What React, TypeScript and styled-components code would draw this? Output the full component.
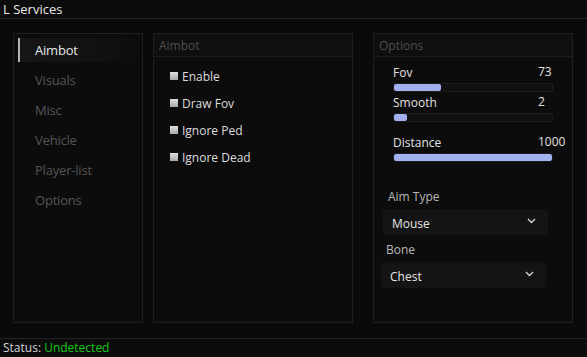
import React from 'react';
import styled, { createGlobalStyle } from 'styled-components';

// ---------------------------------------------------------------------------
// GLOBAL
// ---------------------------------------------------------------------------

const GlobalStyle = createGlobalStyle`
  html, body {
    margin: 0;
    padding: 0;
    background: #0a0a0a;
  }
  body {
    font-family: 'Open Sans', 'Noto Sans', sans-serif;
    color: #e0e0e0;
  }
  * { box-sizing: border-box; }
`;

// ---------------------------------------------------------------------------
// STYLED COMPONENTS
// ---------------------------------------------------------------------------

const Window = styled.div`
  width: 587px;
  height: 357px;
  display: flex;
  flex-direction: column;
  background: #0a0a0a;
  overflow: hidden;
`;

const TitleBar = styled.div`
  height: 19px;
  padding-left: 3px;
  border-bottom: 1px solid #262626;
  background: #0c0c0c;
  font-size: 13px;
  line-height: 18px;
  color: #e8e8e8;
`;

const Main = styled.div`
  flex: 1;
  display: flex;
  gap: 10px;
  padding: 14px 0 0 13px;
`;

const Sidebar = styled.nav`
  width: 130px;
  height: 290px;
  padding: 4px 0 0 4px;
  display: flex;
  flex-direction: column;
  gap: 6px;
  background: #0c0c0c;
  border: 1px solid #1f1f1f;
`;

const NavItem = styled.div<{ $active?: boolean }>`
  height: 24px;
  display: flex;
  align-items: center;
  padding-left: 15px;
  font-size: 13px;
  letter-spacing: -0.2px;
  color: ${({ $active }) => ($active ? '#e6e6e6' : '#555555')};
  border-left: 2px solid ${({ $active }) => ($active ? '#b4b4b4' : 'transparent')};
  background: ${({ $active }) =>
    $active ? 'linear-gradient(90deg, #161616 0%, #121212 55%, transparent 100%)' : 'transparent'};
`;

const Panel = styled.section<{ $shift?: number }>`
  width: 200px;
  height: 290px;
  margin-left: ${({ $shift = 0 }) => $shift}px;
  display: flex;
  flex-direction: column;
  background: #0c0c0c;
  border: 1px solid #1f1f1f;
`;

const PanelHeader = styled.div`
  height: 23px;
  padding-left: 5px;
  display: flex;
  align-items: center;
  background: #0f0f0f;
  border-bottom: 1px solid #1c1c1c;
  font-size: 12px;
  color: #4e4e4e;
`;

const CheckList = styled.div`
  display: flex;
  flex-direction: column;
  gap: 11px;
  padding: 11px 0 0 16px;
`;

const CheckRow = styled.label`
  height: 16px;
  display: flex;
  align-items: center;
  gap: 4px;
  font-size: 12px;
  color: #dcdcdc;
`;

const CheckBox = styled.span<{ $checked?: boolean }>`
  width: 8px;
  height: 8px;
  background: ${({ $checked }) =>
    $checked ? '#a3b0f0' : 'linear-gradient(180deg, #e0e0e0 0%, #a8a8a8 100%)'};
`;

const OptionsBody = styled.div`
  display: flex;
  flex-direction: column;
  padding: 7px 0 0 19px;
`;

const SliderBlock = styled.div<{ $gap?: number }>`
  position: relative;
  width: 160px;
  margin-top: ${({ $gap = 0 }) => $gap}px;
`;

const SliderLabel = styled.div`
  height: 16px;
  display: flex;
  align-items: center;
  font-size: 12px;
  color: #e2e2e2;
`;

const SliderValue = styled.span`
  position: absolute;
  left: 145px;
  top: 0;
  line-height: 16px;
  font-size: 12px;
  color: #e2e2e2;
`;

const Track = styled.div`
  margin-top: 3px;
  height: 9px;
  background: #101010;
  border: 1px solid #1c1c1c;
  border-radius: 2px;
  overflow: hidden;
`;

const Fill = styled.div`
  height: 100%;
  background: #a3b0f0;
  border-radius: 2px;
`;

const FieldLabel = styled.div<{ $top: number; $inset: number }>`
  margin-top: ${({ $top }) => $top}px;
  margin-left: ${({ $inset }) => $inset}px;
  height: 16px;
  display: flex;
  align-items: center;
  font-size: 12px;
  color: #b8b8b8;
`;

const Select = styled.div<{ $inset: number }>`
  width: 165px;
  height: 26px;
  margin-top: 5px;
  margin-left: ${({ $inset }) => $inset}px;
  padding: 2px 12px 0 9px;
  display: flex;
  align-items: center;
  justify-content: space-between;
  background: #141414;
  border-radius: 4px;
  font-size: 12px;
  color: #e6e6e6;

  svg {
    margin-top: -4px;
  }
`;

const Footer = styled.div`
  height: 19px;
  padding-left: 3px;
  border-top: 1px solid #232323;
  background: #0c0c0c;
  font-size: 12px;
  line-height: 18px;
  color: #d4d4d4;
`;

const StatusOk = styled.span`
  color: #13c913;
`;

// ---------------------------------------------------------------------------
// PARTS
// ---------------------------------------------------------------------------

const Chevron: React.FC = () => (
  <svg width="9" height="6" viewBox="0 0 9 6" fill="none">
    <path d="M1 1l3.5 3.5L8 1" stroke="#cfcfcf" strokeWidth="1.4" />
  </svg>
);

const navItems = ['Aimbot', 'Visuals', 'Misc', 'Vehicle', 'Player-list', 'Options'];
const checks = ['Enable', 'Draw Fov', 'Ignore Ped', 'Ignore Dead'];

const sliders = [
  { label: 'Fov', value: 73, pct: 30, gap: 0 },
  { label: 'Smooth', value: 2, pct: 8, gap: 2 },
  { label: 'Distance', value: 1000, pct: 100, gap: 12 },
];

// ---------------------------------------------------------------------------
// APP
// ---------------------------------------------------------------------------

export default function App() {
  return (
    <>
      <GlobalStyle />
      <Window>
        <TitleBar>L Services</TitleBar>

        <Main>
          <Sidebar>
            {navItems.map((item, i) => (
              <NavItem key={item} $active={i === 0}>
                {item}
              </NavItem>
            ))}
          </Sidebar>

          <Panel>
            <PanelHeader>Aimbot</PanelHeader>
            <CheckList>
              {checks.map((c) => (
                <CheckRow key={c}>
                  <CheckBox />
                  {c}
                </CheckRow>
              ))}
            </CheckList>
          </Panel>

          <Panel $shift={10}>
            <PanelHeader>Options</PanelHeader>
            <OptionsBody>
              {sliders.map((s) => (
                <SliderBlock key={s.label} $gap={s.gap}>
                  <SliderLabel>{s.label}</SliderLabel>
                  <SliderValue>{s.value}</SliderValue>
                  <Track>
                    <Fill style={{ width: `${s.pct}%` }} />
                  </Track>
                </SliderBlock>
              ))}

              <FieldLabel $top={26} $inset={-5}>Aim Type</FieldLabel>
              <Select $inset={-10}>
                Mouse
                <Chevron />
              </Select>

              <FieldLabel $top={6} $inset={-7}>Bone</FieldLabel>
              <Select $inset={-12}>
                Chest
                <Chevron />
              </Select>
            </OptionsBody>
          </Panel>
        </Main>

        <Footer>
          Status: <StatusOk>Undetected</StatusOk>
        </Footer>
      </Window>
    </>
  );
}
